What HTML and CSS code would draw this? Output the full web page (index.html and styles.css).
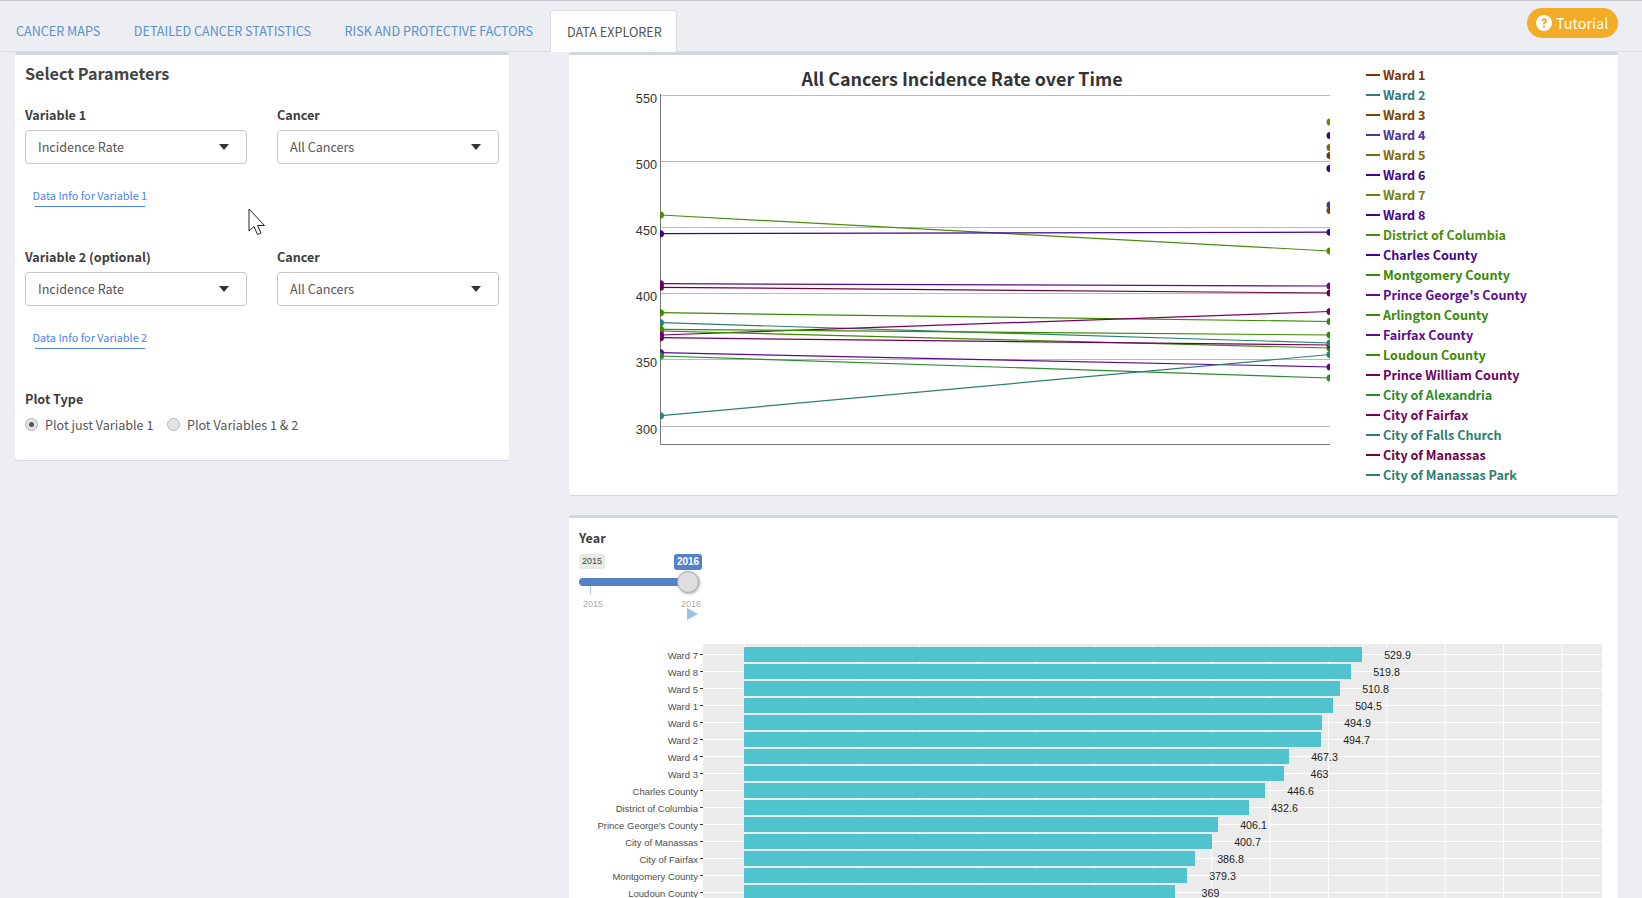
FILE: index.html
```html
<!DOCTYPE html>
<html lang="en">
<head>
<meta charset="utf-8">
<title>Data Explorer</title>
<link rel="stylesheet" href="styles.css">
</head>
<body>
<header class="topbar">
  <nav class="tabs">
    <a class="tab">CANCER MAPS</a>
    <a class="tab">DETAILED CANCER STATISTICS</a>
    <a class="tab">RISK AND PROTECTIVE FACTORS</a>
    <a class="tab tab-active">DATA EXPLORER</a>
  </nav>
  <button class="tutorial">
    <svg class="tutorial-icon" viewBox="0 0 16 16"><circle cx="8" cy="8" r="8" fill="#fff"/><path d="M5.200 6.100c.1-1.700 1.300-2.800 2.900-2.800 1.700 0 2.900 1.100 2.900 2.500 0 1-.6 1.600-1.300 2.100-.6.400-.8.700-.8 1.200v.3H7v-.5c0-.9.400-1.400 1-1.900.6-.4.900-.7.900-1.200 0-.5-.4-.8-.9-.8-.6 0-1 .4-1.100 1.200z" fill="#f4ab25"/><rect x="7" y="10.600" width="1.900" height="1.900" fill="#f4ab25"/></svg>
    Tutorial
  </button>
</header>

<main class="layout">
  <section class="box params">
    <h2 class="box-title">Select Parameters</h2>
    <div class="field-row">
      <div class="field"><label class="label">Variable 1</label><div class="select">Incidence Rate<i class="caret"></i></div></div>
      <div class="field"><label class="label">Cancer</label><div class="select">All Cancers<i class="caret"></i></div></div>
    </div>
    <a class="info-link">Data Info for Variable 1</a>
    <div class="field-row field-row-second">
      <div class="field"><label class="label">Variable 2 (optional)</label><div class="select">Incidence Rate<i class="caret"></i></div></div>
      <div class="field"><label class="label">Cancer</label><div class="select">All Cancers<i class="caret"></i></div></div>
    </div>
    <a class="info-link">Data Info for Variable 2</a>
    <div class="label plot-type">Plot Type</div>
    <div class="radios">
      <span class="radio radio-on"></span><span class="radio-text">Plot just Variable 1</span>
      <span class="radio"></span><span class="radio-text">Plot Variables 1 &amp; 2</span>
    </div>
  </section>

  <div class="right">
    <section class="box line-box">
      <div class="line-main">
        <h3 class="chart-title">All Cancers Incidence Rate over Time</h3>
        <svg class="line-svg" width="760" height="370" viewBox="600 90 760 370">
          <defs><clipPath id="plotclip"><rect x="660" y="90" width="670" height="355"/></clipPath></defs>
          <g class="grid">
            <line x1="660" x2="1330" y1="95.5" y2="95.5"/>
            <line x1="660" x2="1330" y1="161.5" y2="161.5"/>
            <line x1="660" x2="1330" y1="227.5" y2="227.5"/>
            <line x1="660" x2="1330" y1="293.5" y2="293.5"/>
            <line x1="660" x2="1330" y1="359.5" y2="359.5"/>
            <line x1="660" x2="1330" y1="426.5" y2="426.5"/>
          </g>
          <path class="axis" d="M660.5 94V444.5H1330"/>
          <g class="ticks">
            <text x="657" y="103">550</text>
            <text x="657" y="169">500</text>
            <text x="657" y="235">450</text>
            <text x="657" y="301">400</text>
            <text x="657" y="367">350</text>
            <text x="657" y="434">300</text>
          </g>
          <g clip-path="url(#plotclip)">
            <g class="series">
              <line stroke="#4c8c0a" x1="661" y1="215" x2="1330" y2="251"/>
              <line stroke="#42048e" x1="661" y1="233.7" x2="1330" y2="232.2"/>
              <line stroke="#5e0a8e" x1="661" y1="283.7" x2="1330" y2="286"/>
              <line stroke="#700040" x1="661" y1="287.3" x2="1330" y2="293"/>
              <line stroke="#3a8a00" x1="661" y1="312.7" x2="1330" y2="321.5"/>
              <line stroke="#2e8070" x1="661" y1="322.7" x2="1330" y2="343"/>
              <line stroke="#7a0060" x1="661" y1="335" x2="1330" y2="311.5"/>
              <line stroke="#3a8a00" x1="661" y1="329.3" x2="1330" y2="335"/>
              <line stroke="#3a8a00" x1="661" y1="331" x2="1330" y2="348"/>
              <line stroke="#700060" x1="661" y1="337.7" x2="1330" y2="345"/>
              <line stroke="#5e0a8e" x1="661" y1="352.7" x2="1330" y2="367"/>
              <line stroke="#2e8a30" x1="661" y1="356" x2="1330" y2="378"/>
              <line stroke="#2e8070" x1="661" y1="415.7" x2="1330" y2="354.5"/>
            </g>
            <g class="dots">
              <circle fill="#4c8c0a" cx="660.5" cy="215" r="3.5"/>
              <circle fill="#42048e" cx="660.5" cy="233.7" r="3.5"/>
              <circle fill="#5e0a8e" cx="660.5" cy="283.7" r="3.5"/>
              <circle fill="#700040" cx="660.5" cy="287.3" r="3.5"/>
              <circle fill="#3a8a00" cx="660.5" cy="312.7" r="3.5"/>
              <circle fill="#2e8070" cx="660.5" cy="322.7" r="3.5"/>
              <circle fill="#3a8a00" cx="660.5" cy="329.3" r="3.5"/>
              <circle fill="#3a8a00" cx="660.5" cy="331" r="3.5"/>
              <circle fill="#7a0060" cx="660.5" cy="335" r="3.5"/>
              <circle fill="#700060" cx="660.5" cy="337.7" r="3.5"/>
              <circle fill="#5e0a8e" cx="660.5" cy="352.7" r="3.5"/>
              <circle fill="#2e8a30" cx="660.5" cy="356" r="3.5"/>
              <circle fill="#2e8070" cx="660.5" cy="415.7" r="3.5"/>
              <circle fill="#6f7f0a" cx="1330" cy="122" r="3.5"/>
              <circle fill="#42048e" cx="1330" cy="135.5" r="3.5"/>
              <circle fill="#7d6a0c" cx="1330" cy="147.5" r="3.5"/>
              <circle fill="#7a3508" cx="1330" cy="155.5" r="3.5"/>
              <circle fill="#2f7a80" cx="1330" cy="168.5" r="3.5"/>
              <circle fill="#42048e" cx="1330" cy="168.5" r="3.5"/>
              <circle fill="#4b329b" cx="1330" cy="205" r="3.5"/>
              <circle fill="#7e4203" cx="1330" cy="210.5" r="3.5"/>
              <circle fill="#42048e" cx="1330" cy="232.2" r="3.5"/>
              <circle fill="#4c8c0a" cx="1330" cy="251" r="3.5"/>
              <circle fill="#5e0a8e" cx="1330" cy="286" r="3.5"/>
              <circle fill="#700040" cx="1330" cy="293" r="3.5"/>
              <circle fill="#7a0060" cx="1330" cy="311.5" r="3.5"/>
              <circle fill="#3a8a00" cx="1330" cy="321.5" r="3.5"/>
              <circle fill="#3a8a00" cx="1330" cy="335" r="3.5"/>
              <circle fill="#3a8a00" cx="1330" cy="348" r="3.5"/>
              <circle fill="#700060" cx="1330" cy="345" r="3.5"/>
              <circle fill="#2e8070" cx="1330" cy="343" r="3.5"/>
              <circle fill="#2e8070" cx="1330" cy="354.5" r="3.5"/>
              <circle fill="#5e0a8e" cx="1330" cy="367" r="3.5"/>
              <circle fill="#2e8a30" cx="1330" cy="378" r="3.5"/>
            </g>
          </g>
        </svg>
      </div>
      <ul class="legend">
        <li class="c-w1">Ward 1</li>
        <li class="c-w2">Ward 2</li>
        <li class="c-w3">Ward 3</li>
        <li class="c-w4">Ward 4</li>
        <li class="c-w5">Ward 5</li>
        <li class="c-indigo">Ward 6</li>
        <li class="c-w7">Ward 7</li>
        <li class="c-indigo">Ward 8</li>
        <li class="c-dc">District of Columbia</li>
        <li class="c-indigo">Charles County</li>
        <li class="c-green">Montgomery County</li>
        <li class="c-purple">Prince George's County</li>
        <li class="c-green">Arlington County</li>
        <li class="c-purple">Fairfax County</li>
        <li class="c-green">Loudoun County</li>
        <li class="c-pw">Prince William County</li>
        <li class="c-alex">City of Alexandria</li>
        <li class="c-cff">City of Fairfax</li>
        <li class="c-teal">City of Falls Church</li>
        <li class="c-man">City of Manassas</li>
        <li class="c-teal">City of Manassas Park</li>
      </ul>
    </section>

    <section class="box bar-box">
      <div class="label year">Year</div>
      <div class="slider">
        <div class="slider-tags"><span class="tag-min">2015</span><span class="tag-cur">2016</span></div>
        <div class="track"><span class="handle"></span></div>
        <div class="ticks-row"><span class="tick"></span><span class="tick tick-short"></span></div>
        <div class="tick-labels"><span>2015</span><span>2016</span></div>
        <svg class="play" width="11" height="12" viewBox="0 0 11 12"><path d="M0 0L11 6L0 12Z"/></svg>
      </div>
      <div class="bars">
        <div class="bar-row"><span class="bar-name">Ward 7</span><div class="bar-track"><span class="bar" style="width:618px"></span><span class="bar-val">529.9</span></div></div>
        <div class="bar-row"><span class="bar-name">Ward 8</span><div class="bar-track"><span class="bar" style="width:607px"></span><span class="bar-val">519.8</span></div></div>
        <div class="bar-row"><span class="bar-name">Ward 5</span><div class="bar-track"><span class="bar" style="width:596px"></span><span class="bar-val">510.8</span></div></div>
        <div class="bar-row"><span class="bar-name">Ward 1</span><div class="bar-track"><span class="bar" style="width:589px"></span><span class="bar-val">504.5</span></div></div>
        <div class="bar-row"><span class="bar-name">Ward 6</span><div class="bar-track"><span class="bar" style="width:578px"></span><span class="bar-val">494.9</span></div></div>
        <div class="bar-row"><span class="bar-name">Ward 2</span><div class="bar-track"><span class="bar" style="width:577px"></span><span class="bar-val">494.7</span></div></div>
        <div class="bar-row"><span class="bar-name">Ward 4</span><div class="bar-track"><span class="bar" style="width:545px"></span><span class="bar-val">467.3</span></div></div>
        <div class="bar-row"><span class="bar-name">Ward 3</span><div class="bar-track"><span class="bar" style="width:540px"></span><span class="bar-val">463</span></div></div>
        <div class="bar-row"><span class="bar-name">Charles County</span><div class="bar-track"><span class="bar" style="width:521px"></span><span class="bar-val">446.6</span></div></div>
        <div class="bar-row"><span class="bar-name">District of Columbia</span><div class="bar-track"><span class="bar" style="width:505px"></span><span class="bar-val">432.6</span></div></div>
        <div class="bar-row"><span class="bar-name">Prince George's County</span><div class="bar-track"><span class="bar" style="width:474px"></span><span class="bar-val">406.1</span></div></div>
        <div class="bar-row"><span class="bar-name">City of Manassas</span><div class="bar-track"><span class="bar" style="width:468px"></span><span class="bar-val">400.7</span></div></div>
        <div class="bar-row"><span class="bar-name">City of Fairfax</span><div class="bar-track"><span class="bar" style="width:451px"></span><span class="bar-val">386.8</span></div></div>
        <div class="bar-row"><span class="bar-name">Montgomery County</span><div class="bar-track"><span class="bar" style="width:443px"></span><span class="bar-val">379.3</span></div></div>
        <div class="bar-row"><span class="bar-name">Loudoun County</span><div class="bar-track"><span class="bar" style="width:431px"></span><span class="bar-val">369</span></div></div>
      </div>
    </section>
  </div>
</main>

<svg class="cursor" width="20" height="28" viewBox="0 0 20 28"><path d="M1 1V23L6 18.500L9.500 26.500L13 25L9.500 17.500H16.500Z" fill="#fff" stroke="#222" stroke-width="1"/></svg>
</body>
</html>
```
FILE: styles.css
```css
* { box-sizing: border-box; }
html, body { margin: 0; height: 100%; overflow: hidden; }
body {
  background: #eceef3;
  color: #444;
  font-family: "Noto Sans CJK SC", "Source Sans Pro", "Open Sans", sans-serif;
  font-size: 12.600px;
  border-top: 1px solid #c4c6cb;
}

/* top bar */
.topbar { display: flex; justify-content: space-between; height: 51px; border-bottom: 1px solid #dcdee3; }
.tabs { display: flex; align-items: flex-end; }
.tab {
  display: block;
  height: 41px;
  line-height: 41px;
  padding: 0 17.500px 0 16px;
  color: #5c90c9;
  font-size: 12.600px;
  white-space: nowrap;
}
.tab-active {
  padding: 0 14px 0 15.500px;
  height: 42px;
  margin-bottom: -1px;
  background: #fff;
  color: #555;
  border: 1px solid #dcdee3;
  border-bottom: 0;
  border-radius: 4px 4px 0 0;
}
.tutorial {
  display: flex;
  align-items: center;
  gap: 4px;
  width: 91px;
  height: 30px;
  margin: 7px 24px 0 0;
  padding: 0 0 2px 9px;
  border: 0;
  border-radius: 15px;
  background: #f4ab25;
  color: #fff;
  font: 14.400px "Noto Sans CJK SC", sans-serif;
}
.tutorial-icon { width: 16px; height: 16px; flex: none; margin-top: 2px; }

/* layout */
.layout { display: grid; grid-template-columns: 494px 1049px; column-gap: 60px; align-items: start; padding-left: 15px; }
.right { display: flex; flex-direction: column; gap: 20px; }
.box {
  background: #fff;
  border-top: 3px solid #d2d6de;
  border-radius: 3px;
  box-shadow: 0 1px 1px rgba(0, 0, 0, .1);
}

/* parameters */
.params { height: 408px; padding: 0 10px; }
.box-title { margin: 0; padding-top: 6px; font-size: 16.200px; line-height: 24px; font-weight: 600; color: #444; }
.field-row { display: grid; grid-template-columns: 222px 222px; column-gap: 30px; margin-top: 20px; }
.field-row-second { margin-top: 40px; }
.label { display: block; font-weight: 600; font-size: 12.600px; line-height: 20px; color: #3d3d3d; }
.select {
  position: relative;
  height: 34px;
  margin-top: 5px;
  padding-left: 12px;
  line-height: 32px;
  color: #555;
  border: 1px solid #c8c8c8;
  border-radius: 4px;
}
.caret {
  position: absolute;
  top: 13px;
  right: 17px;
  border-style: solid;
  border-width: 6px 5.500px 0;
  border-color: #333 transparent transparent;
}
.info-link {
  display: block;
  width: 110px;
  margin: 23px 0 0 10px;
  padding-bottom: 2px;
  font-size: 10.900px;
  line-height: 17px;
  color: #4c82f0;
  white-space: nowrap;
  border-bottom: 1px solid #4c82f0;
  text-indent: -2.500px;
}
.plot-type { margin-top: 40px; }
.radios { display: flex; align-items: center; margin-top: 5px; height: 20px; color: #555; }
.radio {
  position: relative;
  width: 13px;
  height: 13px;
  margin-right: 7px;
  border-radius: 50%;
  border: 1px solid #b5b5b5;
  background: #e4e4e4;
}
.radio-on::after {
  content: "";
  position: absolute;
  left: 3px;
  top: 3px;
  width: 5px;
  height: 5px;
  border-radius: 50%;
  background: #555;
}
.radio-text { margin-right: 13.500px; }

/* line chart */
.line-box { display: flex; height: 443px; }
.line-main { width: 791px; flex: none; }
.chart-title { margin: 0; padding: 9px 5px 0 0; height: 35px; text-align: center; font-size: 17.900px; line-height: 28px; font-weight: 600; color: #333; }
.line-svg { display: block; margin-left: 31px; }
.grid line { stroke: #b9b9b9; stroke-width: 1; }
.axis { fill: none; stroke: #777; stroke-width: 1; }
.ticks text { font-family: "Liberation Sans", sans-serif; font-size: 12.700px; fill: #333; text-anchor: end; }
.series line { stroke-width: 1.200; }
.legend { list-style: none; margin: 9.500px 0 0 6px; padding: 0; font-weight: 600; font-size: 12.600px; }
.legend li { display: flex; align-items: center; height: 20px; white-space: nowrap; }
.legend li::before { content: ""; flex: none; width: 14px; height: 2px; margin-right: 3px; background: currentColor; }
.c-w1 { color: #7a3508; }
.c-w2 { color: #2f7a80; }
.c-w3 { color: #7e4203; }
.c-w4 { color: #4b329b; }
.c-w5 { color: #7d6a0c; }
.c-w7 { color: #6f7f0a; }
.c-indigo { color: #42048e; }
.c-dc { color: #4c8c0a; }
.c-green { color: #3a8a00; }
.c-purple { color: #5e0a8e; }
.c-pw { color: #700060; }
.c-alex { color: #2e8a30; }
.c-cff { color: #7a0060; }
.c-teal { color: #2e8070; }
.c-man { color: #700040; }

/* slider + bars */
.bar-box { height: 500px; padding: 10px 16px 0 10px; }
.year { line-height: 20px; }
.slider { position: relative; width: 125px; height: 84px; margin-top: 6px; font-family: "Liberation Sans", sans-serif; }
.slider-tags { display: flex; justify-content: space-between; width: 123px; align-items: flex-start; }
.tag-min { padding: 0 3px; height: 15px; line-height: 15px; font-size: 9px; background: #e8ebe5; color: #444; border-radius: 3px; width: 26px; text-align: center; }
.tag-cur { height: 16px; line-height: 16px; font-size: 10px; font-weight: 700; color: #fff; background: #5581c9; border-radius: 3px; width: 28px; text-align: center; }
.track { position: relative; width: 110px; height: 8px; margin-top: 8px; border-radius: 4px; background: #5581c9; }
.handle {
  position: absolute;
  left: 98px;
  top: -7.500px;
  width: 22px;
  height: 22px;
  border-radius: 50%;
  background: #dedede;
  border: 1px solid #aaa;
  box-shadow: 1px 1px 3px rgba(0, 0, 0, .3);
}
.ticks-row { display: flex; height: 8px; padding-left: 11px; }
.tick { width: 1px; height: 8px; background: #a8c6e6; }
.tick-short { height: 3px; margin-left: 97px; }
.tick-labels { display: flex; gap: 78px; padding-left: 4px; margin-top: 5px; font-size: 9px; line-height: 10px; color: #aaa; }
.play { position: absolute; left: 108px; top: 54px; fill: #9dc0e4; }

.bars {
  margin-top: 6px;
  margin-left: 124px;
  padding: 3px 0 20px;
  background-color: #ebebeb;
  background-image: linear-gradient(to right, #fff 1px, transparent 1px);
  background-size: 58.400px 100%;
  background-position: 41px 0;
}
.bar-row { position: relative; height: 17px; display: flex; align-items: center; background: linear-gradient(#fff, #fff) 0 7px / 100% 1px no-repeat; }
.bar-name {
  position: absolute;
  right: calc(100% + 5px);
  font: 9.500px/17px "Liberation Sans", sans-serif;
  color: #4d4d4d;
  white-space: nowrap;
}
.bar-name::after { content: ""; position: absolute; right: -5px; top: 7px; width: 3px; height: 1px; background: #333; }
.bar-track { display: flex; align-items: center; margin: -2px 0 0 41px; height: 15px; }
.bar { display: block; height: 15px; background: #51c3ce; flex: none; }
.bar-val { width: 71px; margin-right: -35px; text-align: center; font: 10.700px "Liberation Sans", sans-serif; color: #222; }

.cursor { position: absolute; left: 248px; top: 208px; }
```
